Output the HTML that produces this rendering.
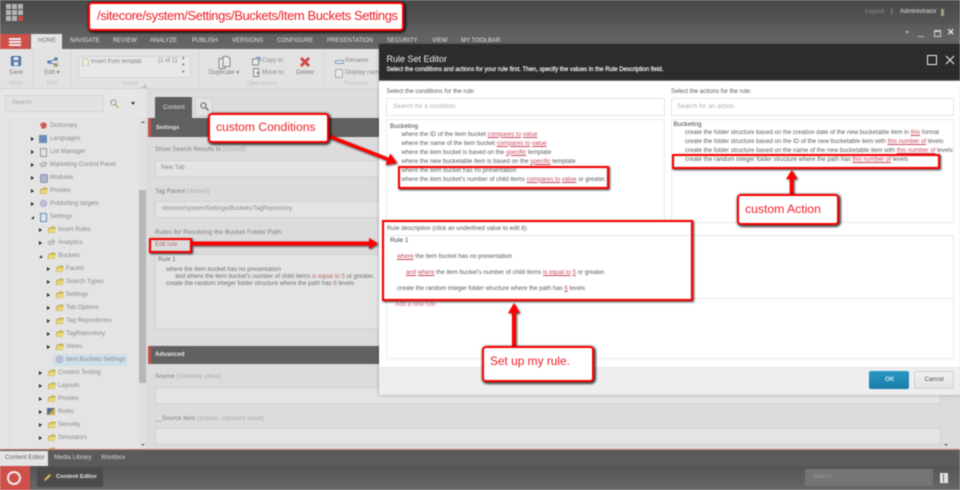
<!DOCTYPE html>
<html><head><meta charset="utf-8"><title>Rule Set Editor</title>
<style>
html,body{margin:0;padding:0;background:#dcdcdc}
#r{position:relative;width:960px;height:490px;overflow:hidden;font-family:"Liberation Sans",sans-serif;font-size:6.1px;color:#777;filter:blur(.4px)}
.a,.t{position:absolute}
.t{white-space:nowrap;line-height:10px}
.tab{top:36px;color:#e2e2e2;font-size:6px;letter-spacing:.03px}
.gl{top:79px;color:#c0c0c0;font-size:6.2px;transform:translateX(-50%)}
.rb{top:68px;color:#808080;font-size:6.2px;transform:translateX(-50%)}
.f{position:absolute;left:155px;width:786px;background:#e4e4e4;border:1px solid #d0d0d0;box-sizing:border-box;border-radius:1px}
.l{color:#808080;font-size:6.2px;left:155px}
.l i{font-style:normal;color:#adadad}
.tr{color:#8b8b8b;font-size:6.15px}
.ar{position:absolute;width:0;height:0;border-left:3px solid #222;border-top:2.5px solid transparent;border-bottom:2.5px solid transparent}
.ao{position:absolute;width:0;height:0;border-right:3.5px solid #222;border-top:3.5px solid transparent}
.ic{position:absolute;width:9px;height:9px}
.d{color:#5c5c5c;font-size:6.1px}
.d u,.d b{color:#c9485b;font-weight:normal}
.box{position:absolute;border:1px solid #eaeaea;box-sizing:border-box;background:#fff}
.note{position:absolute;background:#fff;border:2.5px solid #f00;border-radius:4px;box-sizing:border-box;box-shadow:1px 1px 2px 1px rgba(0,0,0,.75);color:#ee2026;white-space:nowrap}
.rbx{position:absolute;border:2.5px solid #f00;box-sizing:border-box;box-shadow:1px 1px 2px rgba(0,0,0,.8),inset 0 0 1px rgba(0,0,0,.5)}
</style></head>
<body><div id="r">
<svg width="0" height="0" style="position:absolute"><defs>
<symbol id="fo" viewBox="0 0 10 10"><path d="M1 8.6 2.2 3.2h2l.8-1.1h3.6v1.2l.6.1-1 5.2z" fill="#d9bd50" stroke="#9c8b3d" stroke-width=".5"/><path d="M1.2 8.6 2.4 4.3h7l-1.3 4.3z" fill="#ecd675"/></symbol>
<symbol id="ge" viewBox="0 0 10 10"><circle cx="5" cy="5" r="4" fill="#a9a9c9"/><circle cx="5" cy="5" r="2.2" fill="#dcdcee"/><circle cx="5" cy="5" r="1" fill="#8a8ab0"/></symbol>
<symbol id="mk" viewBox="0 0 10 10"><path d="M1 4 7 1.5v6L1 6z" fill="#c8c8c8" stroke="#999" stroke-width=".5"/><path d="M7 3h2v2H7z" fill="#aaa"/><path d="M2 6l.6 2.4h1.2L3.4 6z" fill="#aaa"/></symbol>
</defs></svg>

<!-- top bar -->
<div class="a" style="left:0;top:0;width:960px;height:25px;background:linear-gradient(#494949,#565656)"></div>
<div class="a" style="left:0;top:25px;width:960px;height:24px;background:linear-gradient(#5c5c5c,#686868)"></div>
<svg class="a" style="left:6px;top:4px" width="17" height="17"><g fill="#b4b4b4"><rect width="5" height="5"/><rect x="6" width="5" height="5"/><rect x="12" width="5" height="5"/><rect y="6" width="5" height="5"/><rect x="6" y="6" width="5" height="5"/><rect x="12" y="6" width="5" height="5"/><rect y="12" width="5" height="5"/><rect x="6" y="12" width="5" height="5"/></g><rect x="12" y="12" width="5" height="5" fill="#c04a45"/></svg>
<div class="t" style="left:865px;top:7px;color:#8a8a8a;font-size:6.2px">Logout</div>
<div class="t" style="left:891px;top:7px;color:#ccc;font-size:6.2px">|</div>
<div class="t" style="left:900px;top:7px;color:#e0e0e0;font-size:6.2px">Administrator</div>
<div class="a" style="left:941px;top:9px;width:3px;height:7px;background:#a0a080"></div>

<!-- window buttons -->
<div class="a" style="left:905px;top:31px;border-top:3px solid #aaa;border-left:2.5px solid transparent;border-right:2.5px solid transparent"></div>
<div class="a" style="left:918px;top:36px;width:6px;height:1px;background:#bbb"></div>
<div class="a" style="left:934px;top:30px;width:5px;height:4px;border:1px solid #ccc;border-top-width:2px"></div>
<div class="t" style="left:947px;top:27px;color:#e8e8e8;font-size:9px;font-weight:bold">✕</div>

<!-- hamburger + tabs -->
<div class="a" style="left:0;top:34px;width:30px;height:15px;background:#cf504a"></div>
<div class="a" style="left:9px;top:38px;width:12px;height:1.5px;background:#eee;box-shadow:0 3px 0 #eee,0 6px 0 #eee"></div>
<div class="a" style="left:31px;top:34px;width:31px;height:15px;background:#e4e4e4"></div>
<div class="t tab" style="left:38px;color:#777">HOME</div>
<div class="t tab" style="left:70px">NAVIGATE</div>
<div class="t tab" style="left:113px">REVIEW</div>
<div class="t tab" style="left:150px">ANALYZE</div>
<div class="t tab" style="left:192px">PUBLISH</div>
<div class="t tab" style="left:232px">VERSIONS</div>
<div class="t tab" style="left:277px">CONFIGURE</div>
<div class="t tab" style="left:327px">PRESENTATION</div>
<div class="t tab" style="left:387px">SECURITY</div>
<div class="t tab" style="left:432px">VIEW</div>
<div class="t tab" style="left:461px">MY TOOLBAR</div>

<!-- ribbon -->
<div class="a" style="left:0;top:49px;width:960px;height:40px;background:#e2e2e2;border-bottom:1px solid #d2d2d2;box-sizing:border-box"></div>
<div class="a" style="left:33px;top:49px;width:1px;height:40px;background:#d4d4d4"></div>
<div class="a" style="left:70px;top:49px;width:1px;height:40px;background:#d4d4d4"></div>
<div class="a" style="left:198px;top:49px;width:1px;height:40px;background:#d4d4d4"></div>
<div class="a" style="left:324px;top:49px;width:1px;height:40px;background:#d4d4d4"></div>
<svg class="a" style="left:11px;top:56px" width="11" height="11"><rect x=".5" y=".5" width="9" height="9" rx="1" fill="#5b7faf" stroke="#3f6292"/><rect x="2.5" y="1" width="5" height="3" fill="#dfe6ef"/><rect x="3" y="6" width="4" height="3.5" fill="#dfe6ef"/></svg>
<div class="t rb" style="left:16px">Save</div><div class="t gl" style="left:16px">Write</div>
<svg class="a" style="left:47px;top:57px" width="12" height="11"><circle cx="2" cy="5" r="1.8" fill="#5b7faf"/><circle cx="9" cy="2" r="1.8" fill="#5b7faf"/><circle cx="9" cy="8" r="1.8" fill="#5b7faf"/><path d="M2 5 9 2M2 5 9 8" stroke="#5b7faf" fill="none"/><path d="M7 10l4-4" stroke="#c9a94a" stroke-width="1.4"/></svg>
<div class="t rb" style="left:52px">Edit ▾</div><div class="t gl" style="left:52px">Edit</div>
<div class="a" style="left:78px;top:56px;width:113px;height:22px;background:#e8e8e8;border:1px solid #d4d4d4;box-sizing:border-box"></div>
<svg class="a" style="left:82px;top:58px" width="7" height="8"><path d="M.5.5h4l2 2v5h-6z" fill="#f2ecd4" stroke="#a9a9a9" stroke-width=".6"/></svg>
<div class="t" style="left:91px;top:57px;color:#858585;font-size:6.05px">Insert from templat</div>
<div class="t" style="left:158px;top:56px;color:#858585;font-size:6.05px">(1 of 1)</div>
<div class="t" style="left:182px;top:55px;color:#777;font-size:5px;line-height:7px">▴<br>▾<br>▾</div>
<div class="t gl" style="left:130px">Insert</div>
<div class="a" style="left:142px;top:84px;width:3px;height:3px;border-right:1px solid #aaa;border-bottom:1px solid #aaa"></div>
<svg class="a" style="left:218px;top:56px" width="13" height="13"><path d="M1 2.5h6v10H1z" fill="#e8e8e8" stroke="#888"/><path d="M5 .5h5l2 2v8H5z" fill="#e8e8e8" stroke="#888"/></svg>
<div class="t rb" style="left:224px">Duplicate ▾</div>
<svg class="a" style="left:252px;top:57px" width="9" height="9"><path d="M.5 2h6v6h-6z" fill="#eaeaea" stroke="#888"/><path d="M4 .5h4v4" fill="none" stroke="#5b7faf"/></svg>
<div class="t" style="left:262px;top:56px;color:#8a8a8a;font-size:6.1px">Copy to</div>
<svg class="a" style="left:252px;top:68px" width="9" height="9"><path d="M1.5 .5h5v8h-5z" fill="#eaeaea" stroke="#888"/><path d="M4 5h4" stroke="#5b7faf"/></svg>
<div class="t" style="left:262px;top:68px;color:#8a8a8a;font-size:6.1px">Move to</div>
<svg class="a" style="left:299px;top:56px" width="12" height="12"><path d="M2 2l8 8M10 2l-8 8" stroke="#cf4a44" stroke-width="3"/></svg>
<div class="t rb" style="left:305px">Delete</div>
<div class="t gl" style="left:262px">Operations</div>
<div class="a" style="left:335px;top:60px;width:7px;height:2px;border:1px solid #8aa0bd"></div>
<div class="t" style="left:345px;top:56px;color:#8a8a8a;font-size:6.2px">Rename</div>
<div class="a" style="left:335px;top:69px;width:6px;height:7px;border:1px solid #aaa;background:#e8e8e8"></div>
<div class="t" style="left:345px;top:68px;color:#8a8a8a;font-size:6.2px">Display name</div>
<div class="t gl" style="left:356px">Rename</div>

<!-- tree panel -->
<div class="a" style="left:0;top:89px;width:148px;height:361px;background:#e6e6e6"></div>
<div class="a" style="left:5px;top:95px;width:99px;height:17px;background:#e2e2e2;border:1px solid #d2d2d2;box-sizing:border-box"></div>
<div class="t" style="left:12px;top:98px;color:#a5a5a5;font-size:6.2px">Search</div>
<svg class="a" style="left:110px;top:99px" width="9" height="10"><circle cx="3.5" cy="3.5" r="2.6" fill="none" stroke="#999"/><path d="M5.5 5.5 8.5 9" stroke="#c0a94a" stroke-width="1.3"/></svg>
<div class="a" style="left:131px;top:102px;border-top:3px solid #333;border-left:2.5px solid transparent;border-right:2.5px solid transparent"></div>
<div class="a" style="left:9px;top:118px;width:130px;height:332px;background:#e4e4e4;border-left:1px solid #d8d8d8;box-sizing:border-box"></div>
<div class="a" style="left:139px;top:118px;width:7px;height:332px;background:#e0e0e0"></div>
<div class="a" style="left:139px;top:190px;width:7px;height:193px;background:#b7b7b7"></div>
<div class="a" style="left:141px;top:121px;border-bottom:2.5px solid #666;border-left:2px solid transparent;border-right:2px solid transparent"></div>
<div class="a" style="left:141px;top:444px;border-top:2.5px solid #666;border-left:2px solid transparent;border-right:2px solid transparent"></div>

<svg class="ic" style="left:39px;top:121px"><path d="M1 3 5 1l3 2-1 4-4 1z" fill="#cf5a58"/></svg><div class="t tr" style="left:50px;top:121px">Dictionary</div>
<div class="ar" style="left:31px;top:137px"></div><div class="a" style="left:39px;top:135px;width:8px;height:8px;background:#6a8cb7"></div><div class="t tr" style="left:50px;top:134px">Languages</div>
<div class="ar" style="left:31px;top:150px"></div><div class="a" style="left:40px;top:148px;width:5px;height:7px;background:#e2e2ea;border:1px solid #999"></div><div class="t tr" style="left:50px;top:147px">List Manager</div>
<div class="ar" style="left:31px;top:163px"></div><svg class="ic" style="left:39px;top:160px"><use href="#mk" width="9" height="9"/></svg><div class="t tr" style="left:50px;top:160px">Marketing Control Panel</div>
<div class="ar" style="left:31px;top:176px"></div><div class="a" style="left:40px;top:174px;width:6px;height:7px;background:#a9b6cc;border-radius:2px;border:1px solid #8c96a8"></div><div class="t tr" style="left:50px;top:173px">Modules</div>
<div class="ar" style="left:31px;top:189px"></div><svg class="ic" style="left:39px;top:186px"><use href="#fo" width="9" height="9"/></svg><div class="t tr" style="left:50px;top:186px">Proxies</div>
<div class="ar" style="left:31px;top:202px"></div><svg class="ic" style="left:39px;top:199px"><use href="#ge" width="9" height="9"/></svg><div class="t tr" style="left:50px;top:199px">Publishing targets</div>
<div class="ao" style="left:31px;top:216px"></div><div class="a" style="left:40px;top:213px;width:5px;height:7px;background:#dfe4ee;border:1px solid #6a8cb7"></div><div class="t tr" style="left:50px;top:212px">Settings</div>
<div class="ar" style="left:39px;top:228px"></div><svg class="ic" style="left:47px;top:225px"><use href="#fo" width="9" height="9"/></svg><div class="t tr" style="left:58px;top:225px">Insert Rules</div>
<div class="ar" style="left:39px;top:241px"></div><svg class="ic" style="left:47px;top:238px"><use href="#mk" width="9" height="9"/></svg><div class="t tr" style="left:58px;top:238px">Analytics</div>
<div class="ao" style="left:39px;top:255px"></div><svg class="ic" style="left:47px;top:251px"><use href="#fo" width="9" height="9"/></svg><div class="t tr" style="left:58px;top:251px">Buckets</div>
<div class="ar" style="left:47px;top:267px"></div><svg class="ic" style="left:55px;top:264px"><use href="#fo" width="9" height="9"/></svg><div class="t tr" style="left:66px;top:264px">Facets</div>
<div class="ar" style="left:47px;top:280px"></div><svg class="ic" style="left:55px;top:277px"><use href="#fo" width="9" height="9"/></svg><div class="t tr" style="left:66px;top:277px">Search Types</div>
<div class="ar" style="left:47px;top:293px"></div><svg class="ic" style="left:55px;top:290px"><use href="#fo" width="9" height="9"/></svg><div class="t tr" style="left:66px;top:290px">Settings</div>
<div class="ar" style="left:47px;top:306px"></div><svg class="ic" style="left:55px;top:303px"><use href="#fo" width="9" height="9"/></svg><div class="t tr" style="left:66px;top:303px">Tab Options</div>
<div class="ar" style="left:47px;top:319px"></div><svg class="ic" style="left:55px;top:316px"><use href="#fo" width="9" height="9"/></svg><div class="t tr" style="left:66px;top:316px">Tag Repositories</div>
<div class="ar" style="left:47px;top:332px"></div><svg class="ic" style="left:55px;top:329px"><use href="#fo" width="9" height="9"/></svg><div class="t tr" style="left:66px;top:329px">TagRepository</div>
<div class="ar" style="left:47px;top:345px"></div><svg class="ic" style="left:55px;top:342px"><use href="#fo" width="9" height="9"/></svg><div class="t tr" style="left:66px;top:342px">Views</div>
<div class="a" style="left:53px;top:354px;width:74px;height:12px;background:#cfdfe8"></div><svg class="ic" style="left:55px;top:355px"><use href="#ge" width="9" height="9"/></svg><div class="t tr" style="left:66px;top:355px">Item Buckets Settings</div>
<div class="ar" style="left:39px;top:371px"></div><svg class="ic" style="left:47px;top:368px"><use href="#fo" width="9" height="9"/></svg><div class="t tr" style="left:58px;top:368px">Content Testing</div>
<div class="ar" style="left:39px;top:384px"></div><svg class="ic" style="left:47px;top:381px"><use href="#fo" width="9" height="9"/></svg><div class="t tr" style="left:58px;top:381px">Layouts</div>
<div class="ar" style="left:39px;top:397px"></div><svg class="ic" style="left:47px;top:394px"><use href="#fo" width="9" height="9"/></svg><div class="t tr" style="left:58px;top:394px">Proxies</div>
<div class="ar" style="left:39px;top:410px"></div><div class="a" style="left:47px;top:408px;width:8px;height:7px;background:linear-gradient(135deg,#556a8a 50%,#c9a94a 50%)"></div><div class="t tr" style="left:58px;top:407px">Rules</div>
<div class="ar" style="left:39px;top:423px"></div><svg class="ic" style="left:47px;top:420px"><use href="#fo" width="9" height="9"/></svg><div class="t tr" style="left:58px;top:420px">Security</div>
<div class="ar" style="left:39px;top:436px"></div><svg class="ic" style="left:47px;top:433px"><use href="#fo" width="9" height="9"/></svg><div class="t tr" style="left:58px;top:433px">Simulators</div>
<svg class="ic" style="left:47px;top:446px;height:3px"><use href="#fo" width="9" height="9"/></svg>

<!-- content -->
<div class="a" style="left:146px;top:89px;width:814px;height:361px;background:#dcdcdc"></div>
<div class="a" style="left:155px;top:97px;width:37px;height:21px;background:#5f5f5f"></div>
<div class="t" style="left:163px;top:103px;color:#ddd;font-size:6.2px">Content</div>
<div class="a" style="left:195px;top:97px;width:18px;height:19px;background:#e2e2e2;border:1px solid #cfcfcf;box-sizing:border-box"></div>
<svg class="a" style="left:200px;top:102px" width="9" height="9"><circle cx="3.5" cy="3.5" r="2.6" fill="none" stroke="#666"/><path d="M5.5 5.5 8.5 8.5" stroke="#666" stroke-width="1.3"/></svg>
<div class="a" style="left:148px;top:118px;width:812px;height:19px;background:#616161"></div>
<div class="a" style="left:148px;top:118px;width:2.5px;height:19px;background:#c4504b"></div>
<div class="t" style="left:156px;top:123px;color:#e6e6e6;font-size:5.9px;font-weight:bold">Settings</div>
<div class="t l" style="top:145px">Show Search Results In <i>[shared]:</i></div>
<div class="f" style="top:160px;height:17px"></div>
<div class="t" style="left:161px;top:163px;color:#8c8c8c">New Tab</div>
<div class="t l" style="top:187px">Tag Parent <i>[shared]:</i></div>
<div class="f" style="top:201px;height:17px"></div>
<div class="t" style="left:162px;top:204px;color:#8c8c8c">sitecore/system/Settings/Buckets/TagRepository</div>
<div class="t l" style="top:228px;font-size:6.6px">Rules for Resolving the Bucket Folder Path:</div>
<div class="t" style="left:155px;top:240px;color:#b86a6a">Edit rule</div>
<div class="f" style="top:254px;height:75px"></div>
<div class="t" style="left:158px;top:255px;color:#707070">Rule 1</div>
<div class="t" style="left:166px;top:265px;color:#707070">where the item bucket has no presentation</div>
<div class="t" style="left:175px;top:272px;color:#707070">and where the item bucket's number of child items <span style="color:#b86a6a">is equal to 5</span> or greater.</div>
<div class="t" style="left:166px;top:279px;color:#707070">create the random integer folder structure where the path has <span style="color:#b86a6a">6</span> levels</div>
<div class="a" style="left:148px;top:346px;width:812px;height:18px;background:#616161"></div>
<div class="a" style="left:148px;top:346px;width:2.5px;height:18px;background:#c4504b"></div>
<div class="t" style="left:155px;top:350px;color:#e6e6e6;font-size:6.2px;font-weight:bold">Advanced</div>
<div class="t l" style="top:372px">Source <i>[standard value]:</i></div>
<div class="f" style="top:387px;height:17px"></div>
<div class="t l" style="top:414px">__Source Item <i>[shared, standard value]:</i></div>
<div class="f" style="top:428px;height:17px"></div>
<div class="a" style="left:944px;top:444px;border-top:2.5px solid #666;border-left:2px solid transparent;border-right:2px solid transparent"></div>

<!-- bottom -->
<div class="a" style="left:0;top:449px;width:960px;height:1.5px;background:#c87470"></div>
<div class="a" style="left:0;top:450px;width:960px;height:16px;background:#5b5b5b"></div>
<div class="a" style="left:0;top:451px;width:48px;height:15px;background:#e4e4e4"></div>
<div class="t" style="left:5px;top:453px;color:#666;font-size:6.2px">Content Editor</div>
<div class="t" style="left:54px;top:453px;color:#d8d8d8;font-size:6.2px">Media Library</div>
<div class="t" style="left:101px;top:453px;color:#d8d8d8;font-size:6.2px">Workbox</div>
<div class="a" style="left:0;top:466px;width:960px;height:24px;background:linear-gradient(#555,#686868)"></div>
<div class="a" style="left:0;top:466px;width:30px;height:24px;background:#cf4f49"></div>
<div class="a" style="left:7px;top:471px;width:10px;height:10px;border:2.5px solid #eee;border-radius:50%"></div>
<div class="a" style="left:37px;top:467px;width:66px;height:20px;background:#4b4b4b"></div>
<svg class="a" style="left:43px;top:473px" width="9" height="9"><path d="M1 8 2 5.5 6.5 1 8 2.5 3.5 7z" fill="#d9bd50"/></svg>
<div class="t" style="left:56px;top:472px;color:#e6e6e6;font-size:5.9px;font-weight:bold">Content Editor</div>
<div class="a" style="left:805px;top:469px;width:128px;height:17px;background:#747474;border-radius:1px"></div>
<div class="t" style="left:813px;top:472px;color:#9a9a9a;font-size:6.2px">Search</div>
<div class="a" style="left:940px;top:473px;width:8px;height:10px;background:#e4e4e4"></div>
<div class="a" style="left:943px;top:474px;width:1px;height:8px;background:#666"></div>

<!-- dialog -->
<div class="a" style="left:379px;top:44px;width:581px;height:351px;background:#fff;box-shadow:0 0 3px rgba(0,0,0,.35)"></div>
<div class="a" style="left:379px;top:44px;width:581px;height:37px;background:#2c2c2c;border-bottom:1px solid #777;box-sizing:border-box"></div>
<div class="t" style="left:386.5px;top:54px;color:#f0f0f0;font-size:9px">Rule Set Editor</div>
<div class="t" style="left:386.5px;top:65px;color:#f0f0f0;font-size:6px;-webkit-text-stroke:.2px #f0f0f0">Select the conditions and actions for your rule first. Then, specify the values in the Rule Description field.</div>
<div class="a" style="left:927px;top:55px;width:8px;height:8px;border:1px solid #e8e8e8"></div>
<svg class="a" style="left:945px;top:55px" width="10" height="10"><path d="M1 1l8 8M9 1 1 9" stroke="#e8e8e8" stroke-width="1.1"/></svg>

<div class="t d" style="left:386.5px;top:87px">Select the conditions for the rule:</div>
<div class="box" style="left:386px;top:98px;width:279px;height:18px;border-width:1px;border-color:#e4e4e4"></div>
<div class="t" style="left:393px;top:102px;color:#aeaeae;font-size:6.4px">Search for a condition</div>
<div class="box" style="left:386px;top:119px;width:279px;height:104px"></div>
<div class="t d" style="left:390px;top:122px;color:#444;font-size:6.4px">Bucketing</div>
<div class="t d" style="left:401.5px;top:129.5px">where the ID of the item bucket <u>compares to</u> <u>value</u></div>
<div class="t d" style="left:401.5px;top:138.5px">where the name of the item bucket <u>compares to</u> <u>value</u></div>
<div class="t d" style="left:401.5px;top:147.5px">where the item bucket is based on the <u>specific</u> template</div>
<div class="t d" style="left:401.5px;top:156.5px">where the new bucketable item is based on the <u>specific</u> template</div>
<div class="t d" style="left:401.5px;top:165.5px">where the item bucket has no presentation</div>
<div class="t d" style="left:401.5px;top:174.5px">where the item bucket's number of child items <u>compares to</u> <u>value</u> or greater.</div>

<div class="t d" style="left:671px;top:87px">Select the actions for the rule:</div>
<div class="box" style="left:671px;top:98px;width:283px;height:18px;border-color:#e4e4e4"></div>
<div class="t" style="left:677px;top:102px;color:#aeaeae;font-size:6.4px">Search for an action</div>
<div class="box" style="left:671px;top:119px;width:283px;height:104px"></div>
<div class="t d" style="left:673.5px;top:120px;color:#444;font-size:6.4px">Bucketing</div>
<div class="t d" style="left:685px;top:127.5px">create the folder structure based on the creation date of the new bucketable item in <u>this</u> format</div>
<div class="t d" style="left:685px;top:136.5px">create the folder structure based on the ID of the new bucketable item with <u>this number of</u> levels</div>
<div class="t d" style="left:685px;top:145.5px">create the folder structure based on the name of the new bucketable item with <u>this number of</u> levels</div>
<div class="t d" style="left:685px;top:154.5px">create the random integer folder structure where the path has <u>this number of</u> levels</div>

<div class="box" style="left:386px;top:235px;width:568px;height:124px"></div>
<div class="a" style="left:386px;top:298px;width:568px;height:1px;background:#eaeaea"></div>
<div class="a" style="left:384px;top:222px;width:306px;height:77px;background:#fff"></div>
<div class="t d" style="left:387px;top:224px">Rule description (click an underlined value to edit it):</div>
<div class="a" style="left:386px;top:235px;width:304px;height:1px;background:#eaeaea"></div>
<div class="t d" style="left:390px;top:236px;color:#444;font-size:6.4px">Rule 1</div>
<div class="t d" style="left:397px;top:252px"><u>where</u> the item bucket has no presentation</div>
<div class="t d" style="left:406px;top:268px"><u>and</u> <u>where</u> the item bucket's number of child items <u>is equal to</u> <u>5</u> or greater.</div>
<div class="t d" style="left:397px;top:284px">create the random integer folder structure where the path has <u>6</u> levels</div>
<div class="t" style="left:395px;top:300px;color:#d4717f;font-size:6.1px">Add a new rule</div>

<div class="a" style="left:379px;top:367px;width:581px;height:28px;background:#eeeeee;border-top:1px solid #e4e4e4;box-sizing:border-box"></div>
<div class="a" style="left:869px;top:371px;width:40px;height:18px;background:linear-gradient(#2a98c4,#1a7ca8);border-radius:2px"></div>
<div class="t" style="left:885px;top:375px;color:#cfe6f0;font-size:6.2px;font-weight:bold">OK</div>
<div class="a" style="left:914px;top:371px;width:40px;height:18px;background:linear-gradient(#f0f0f0,#e2e2e2);border:1px solid #d0d0d0;border-radius:2px;box-sizing:border-box"></div>
<div class="t" style="left:924.5px;top:375px;color:#555;font-size:6.2px">Cancel</div>

<!-- annotations -->
<div class="rbx" style="left:398px;top:166px;width:211px;height:23px"></div>
<div class="rbx" style="left:672px;top:154px;width:268px;height:15px"></div>
<div class="rbx" style="left:382px;top:220px;width:311px;height:81px"></div>
<div class="rbx" style="left:149px;top:238px;width:43px;height:15px"></div>
<svg class="a" style="left:0;top:0;filter:drop-shadow(1px 1px 1px rgba(0,0,0,.7))" width="960" height="490">
<path d="M328 134 388.6 157.7 390.2 153.5 397 163 385.5 165 387 160.7 326 137z" fill="#f00"/>
<path d="M192 241.5H369V238L378 243.5 369 249V245.5H192z" fill="#f00"/>
<path d="M789.7 194V179H786L791.7 170 797.5 179H793.7V194z" fill="#f00"/>
<path d="M512 346V313H508L514 303 520 313H516V346z" fill="#f00"/>
</svg>
<div class="note" style="left:88px;top:2px;width:316px;height:29px;font-size:13px;letter-spacing:-.42px;line-height:24px;padding-left:7px">/sitecore/system/Settings/Buckets/Item Buckets Settings</div>
<div class="note" style="left:208px;top:113px;width:121px;height:30px;font-size:12.1px;line-height:25px;padding-left:6px">custom Conditions</div>
<div class="note" style="left:737px;top:194px;width:102px;height:31px;font-size:12.2px;line-height:26px;padding-left:6px">custom Action</div>
<div class="note" style="left:482px;top:346px;width:112px;height:36px;font-size:11.9px;line-height:26px;padding-left:6px">Set up my rule.</div>
</div></body></html>
